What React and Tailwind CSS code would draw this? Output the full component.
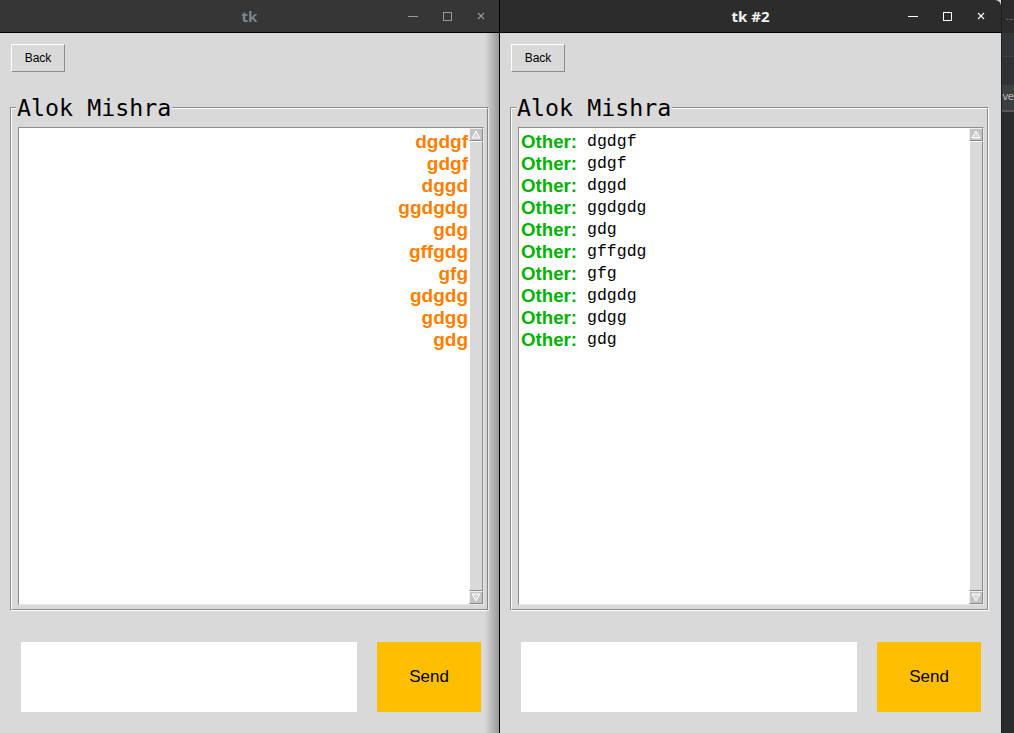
import React from 'react';

const messages = ['dgdgf', 'gdgf', 'dggd', 'ggdgdg', 'gdg', 'gffgdg', 'gfg', 'gdgdg', 'gdgg', 'gdg'];

const TitleBar = ({ title, active }) => (
  <div
    className={`relative h-[33px] flex items-center justify-center border-b border-black ${
      active ? 'bg-[#2c2c2c] rounded-tr-[6px]' : 'bg-[#363636]'
    }`}
  >
    <span
      className={`font-bold text-[15px] font-['Noto_Sans',sans-serif] ${
        active ? 'text-[#f2f2f2]' : 'text-[#7d8588]'
      }`}
    >
      {title}
    </span>
    <div className={`absolute top-0 h-[32px] flex items-center ${active ? 'right-[3px]' : 'right-[1px]'}`}>
      <div className="w-[34px] flex justify-center">
        <div className={`w-[10px] h-[1px] ${active ? 'bg-white' : 'bg-[#9a9a9a]'}`} />
      </div>
      <div className="w-[34px] flex justify-center">
        <div className={`w-[9px] h-[9px] border ${active ? 'border-white' : 'border-[#9a9a9a]'}`} />
      </div>
      <div className="w-[34px] flex justify-center">
        <svg width="8" height="8" viewBox="0 0 8 8">
          <path d="M1 1 L7 7 M7 1 L1 7" stroke={active ? '#ffffff' : '#9a9a9a'} strokeWidth="1.1" />
        </svg>
      </div>
    </div>
  </div>
);

const Scrollbar = () => (
  <div className="w-[14px] flex flex-col bg-[#d9d9d9]">
    <div className="h-[13px] border border-t-[#f0f0f0] border-l-[#f0f0f0] border-b-[#8a8a8a] border-r-[#8a8a8a] bg-[#c4c4c4] flex items-center justify-center">
      <svg width="10" height="9" viewBox="0 0 10 9">
        <path d="M5 1 L9 8 L1 8 Z" fill="#d9d9d9" stroke="#ffffff" strokeWidth="1" />
      </svg>
    </div>
    <div className="flex-1 border border-t-[#ffffff] border-l-[#ffffff] border-b-[#8a8a8a] border-r-[#8a8a8a] bg-[#d9d9d9]" />
    <div className="h-[13px] border border-t-[#f0f0f0] border-l-[#f0f0f0] border-b-[#8a8a8a] border-r-[#8a8a8a] bg-[#c4c4c4] flex items-center justify-center">
      <svg width="10" height="9" viewBox="0 0 10 9">
        <path d="M1 1 L9 1 L5 8 Z" fill="#d9d9d9" stroke="#ffffff" strokeWidth="1" />
      </svg>
    </div>
  </div>
);

const ChatWindow = ({ title, active, mine }) => (
  <div className={`relative shrink-0 flex flex-col bg-[#d9d9d9] h-full ${active ? 'w-[501px]' : 'w-[499px]'}`}>
    <TitleBar title={title} active={active} />
    <div className="flex-1 flex flex-col pl-[11px]">
      <div className="mt-[11px]">
        <button className="w-[54px] h-[28px] border border-t-white border-l-white border-b-[#8c8c8c] border-r-[#8c8c8c] bg-[#d9d9d9] text-[12px] text-black font-['Liberation_Sans',Arial,sans-serif] flex items-center justify-center">
          Back
        </button>
      </div>

      {/* labelframe */}
      <div className="relative mt-[35px] -ml-[1px] w-[479px] h-[504px] border border-t-[#8c8c8c] border-l-[#8c8c8c] border-b-white border-r-white">
        <div className="h-full border border-t-white border-l-white border-b-[#8c8c8c] border-r-[#8c8c8c] pt-[18px] pl-[6px] pr-[3px] pb-[4px]">
          <div className="h-full flex border border-t-[#8c8c8c] border-l-[#8c8c8c] border-b-[#e6e6e6] border-r-[#e6e6e6]">
            <div className="flex-1 bg-white pt-[3px] px-[1px] overflow-hidden">
              {messages.map((m, i) =>
                mine ? (
                  <div
                    key={i}
                    className="h-[22px] leading-[22px] text-right text-[19px] font-bold text-[#ff7f00] font-['Liberation_Sans',Arial,sans-serif]"
                  >
                    {m}
                  </div>
                ) : (
                  <div key={i} className="h-[22px] flex items-center pl-[1px]">
                    <span className="text-[18.7px] leading-[22px] font-bold text-[#00b200] font-['Liberation_Sans',Arial,sans-serif]">
                      Other:
                    </span>
                    <span className="ml-[10px] text-[16.5px] leading-[22px] text-black font-['Liberation_Mono','Courier_New',monospace]">
                      {m}
                    </span>
                  </div>
                )
              )}
            </div>
            <Scrollbar />
          </div>
        </div>
        <span className="absolute left-[5px] -top-[12px] px-[1px] bg-[#d9d9d9] text-[23.3px] leading-[24px] text-black font-['DejaVu_Sans_Mono',monospace]">
          Alok Mishra
        </span>
      </div>

      <div className="mt-[31px] flex pl-[10px]">
        <div className="w-[336px] h-[70px] bg-white" />
        <button className="ml-[20px] w-[104px] h-[70px] bg-[#ffbf00] text-[17px] text-black font-['Liberation_Sans',Arial,sans-serif] flex items-center justify-center">
          Send
        </button>
      </div>
    </div>
    {!active && (
      <div className="absolute right-0 top-[33px] bottom-0 w-[14px] bg-gradient-to-r from-transparent to-black/30 pointer-events-none" />
    )}
  </div>
);

const EditorSliver = () => (
  <div className="flex-1 min-w-0 overflow-hidden flex flex-col bg-[#2a2b2d] border-l border-[#1e1e1e]">
    <div className="h-[33px] bg-[#2b2b2b] flex items-end pb-[12px] pl-[4px]">
      <span className="text-[9px] leading-[9px] text-[#8a9aa8]">...</span>
    </div>
    <div className="h-[24px] bg-[#333538] border-b border-[#3d3f42]" />
    <div className="h-[28px] bg-[#2f3134]" />
    <div className="h-[27px] bg-[#3d3e40] border-b-2 border-[#55575a] flex items-center overflow-hidden">
      <span className="text-[11px] tracking-[-1px] text-[#b8b8b8] font-['DejaVu_Sans_Mono',monospace] whitespace-nowrap">ve</span>
    </div>
    <div className="flex-1" />
  </div>
);

export default function App() {
  return (
    <div className="flex w-[1014px] h-[733px] overflow-hidden bg-[#2a2b2d]">
      <ChatWindow title="tk" active={false} mine />
      <div className="shrink-0 border-l border-black h-full">
        <ChatWindow title="tk #2" active mine={false} />
      </div>
      <EditorSliver />
    </div>
  );
}
